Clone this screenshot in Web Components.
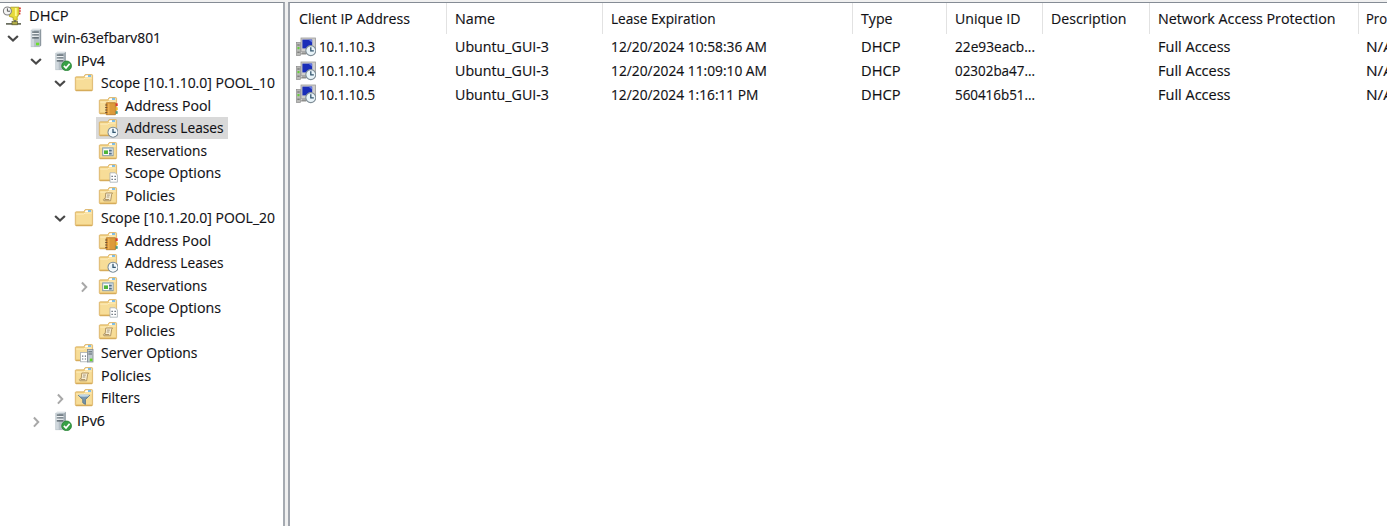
<!DOCTYPE html>
<html lang="en">
<head>
<meta charset="utf-8">
<title>DHCP</title>
<style>
html,body{margin:0;height:100%;overflow:hidden;background:#f0f0f0}
body{font-family:"Open Sans","Noto Sans",sans-serif;font-size:14.4px;color:#101014;-webkit-text-stroke:.15px #101014}
</style>
</head>
<body>
<dhcp-console></dhcp-console>
<script>
const folder = `<path d="M1.3 4.6Q1.3 3.8 2.2 3.8H9.6L11.2 1.5H17.6Q18.6 1.5 18.6 2.5V16.8Q18.6 17.8 17.6 17.8H2.3Q1.3 17.8 1.3 16.8Z" fill="#f0cd7c" stroke="#d9b164" stroke-width=".8"/><path d="M11.8 2.3H17.4V4H10.6Z" fill="#fff"/><path d="M14 3H17" stroke="#3b9ce0" stroke-width="1.3"/><path d="M2.2 5.6H9.8L11 4.6H17.8V16.6H2.2Z" fill="#f7dd98"/><path d="M2.2 6H9.9L11.1 5H17.8" stroke="#fff0c2" fill="none"/><path d="M2 17.3H18" stroke="#d3a753"/>`;
const server = `<path d="M5 2.2L6.6 .6H15L13.7 2.2Z" fill="#e3e8eb"/><path d="M13.5 2.2L15.2 .8V17.4L13.5 19Z" fill="#8c979f"/><rect x="4.8" y="1.9" width="9" height="17.2" fill="#b5bfc6"/><rect x="5.1" y="2.3" width="3" height="16.3" fill="#d0d8dd"/><path d="M6.2 4.2H12.8M6.2 7H12.8M6.2 9.8H12.8" stroke="#4c5860" stroke-width="1.2"/><path d="M6.2 5.4H12.8M6.2 8.2H12.8" stroke="#f5f7f8" stroke-width="1"/>`;
const clock = `<circle cx="15" cy="14.2" r="5" fill="#e9f4f9" stroke="#7b8c98" stroke-width="1.1"/><circle cx="15" cy="14.2" r="3.8" fill="none" stroke="#fff"/><path d="M15 10.8V14.4H17.8" stroke="#34566f" fill="none" stroke-width="1.3"/>`;
const check = `<circle cx="14.6" cy="14.9" r="4.9" fill="#37a046" stroke="#1c7a29" stroke-width=".7"/><path d="M11.9 14.9L14 17L17.6 12.7" stroke="#fff" stroke-width="1.7" fill="none"/>`;
const icons = {
  dhcp: `<path d="M8.6 1.2H17V8L15.2 11.5V14.3H11.2V11.5L7.4 10.5V8Z" fill="#e6da3a" stroke="#a79b1c" stroke-width=".8"/><path d="M13.8 2V10" stroke="#fffa91" stroke-width="1.8"/><path d="M17.1 2.4H18.8M17.1 5H18.8M17 7.6H18.4" stroke="#d8382f" stroke-width="1.7"/><path d="M13 14V18M4 17.8H19" stroke="#6b6f60" stroke-width="1.8"/><rect x="10" y="15.6" width="5.6" height="3.2" fill="#b0ac48" stroke="#5d5b34" stroke-width=".7"/><circle cx="5.4" cy="5" r="4" fill="#f4f4f4" stroke="#808080" stroke-width="1.1"/><path d="M5.4 2.4V5.2H8" stroke="#555" fill="none"/>`,
  server: server + `<rect x="10" y="14.7" width="3.2" height="2.6" fill="#6be02d"/>`,
  checked: `<g transform="translate(-1.4 0)">${server}</g>` + check,
  folder,
  pool: folder + `<path d="M8.3 6.8H17.4V18.7H8.3Z" fill="#dc9a3a" stroke="#b87a2c" stroke-width=".9"/><path d="M10.8 7.4V18.3" stroke="#f0b65c" stroke-width="1.3"/><path d="M7.2 9H9.3M7.2 11.5H9.3M7.2 14H9.3M7.2 16.5H9.3" stroke="#715033"/><path d="M18.7 7.3V10" stroke="#e3342b" stroke-width="2"/><path d="M18.7 11.3V14" stroke="#f1bd28" stroke-width="2"/><path d="M18.7 15.2V17.8" stroke="#3f9a8a" stroke-width="2"/>`,
  leases: folder + clock,
  reserve: folder + `<rect x="4.7" y="6.9" width="10.4" height="7.8" fill="#fbfcfb" stroke="#859aa4" stroke-width="1"/><path d="M5 7.2H14.8" stroke="#a9c3d3"/><rect x="6" y="9.4" width="4" height="3.6" fill="#4fb53a"/><rect x="11" y="8.6" width="2.8" height="2" fill="#54718a"/><rect x="11" y="11.6" width="2.8" height="2" fill="#54718a"/>`,
  options: folder + `<path d="M12 9.8H17.2L19.4 12V19.2H12Z" fill="#fff" stroke="#a5adb4" stroke-width=".8"/><path d="M13.5 13.3H14.8M16.5 13.3H17.8M13.5 16.3H14.8M16.5 16.3H17.8" stroke="#56616c" stroke-width="1.3"/>`,
  policies: folder + `<path d="M7.8 7H14.6Q13.3 8 13.4 10L12.6 14.8H5.9Q4.8 13.4 6.1 12.7L7.2 12.5Z" fill="#f9eed2" stroke="#a98d5b" stroke-width=".9"/><path d="M9 9.1H11.8M8.7 11H11.3" stroke="#9d917a" stroke-width=".9"/><path d="M6.5 13.6H11.2" stroke="#a98d5b"/>`,
  srvoptions: folder + `<rect x="6.6" y="9.4" width="6.9" height="9.4" fill="#fff" stroke="#a5adb4" stroke-width=".8"/><path d="M8.1 13.2H9.3M10.8 13.2H12M8.1 16H9.3M10.8 16H12" stroke="#56616c" stroke-width="1.2"/><rect x="13.4" y="6.4" width="5.6" height="12.6" fill="#c0c9cf" stroke="#828d95" stroke-width=".8"/><path d="M14.4 8.8H18M14.4 11H18" stroke="#5c6870"/><rect x="15.8" y="15.6" width="2.6" height="2.6" fill="#5fd524"/>`,
  filters: folder + `<path d="M4.4 7.4H15.6L11.4 11.5V16.4L8.8 14.8V11.5Z" fill="#7896ad" stroke="#56748a" stroke-width=".9"/><ellipse cx="10" cy="7.5" rx="5" ry="1.2" fill="#c2d8e5"/>`,
  client: `<rect x=".6" y="5.6" width="3.8" height="12.8" fill="#b9bab7" stroke="#8a8a8a" stroke-width=".7"/><path d="M1.3 8H3.7M1.3 15.2H3.7" stroke="#666"/><rect x="1.5" y="10" width="2" height="2.2" fill="#65cf3a"/><rect x="5" y="1" width="14.4" height="13.4" fill="#cfcecb" stroke="#999" stroke-width=".8"/><rect x="6.4" y="2.6" width="9.8" height="8.8" fill="#1a2db8"/><path d="M12.4 2.8H16V5.6Z" fill="#6077e2"/><path d="M5.5 15.2H12L10 17.6H5Z" fill="#8e8e8c"/><circle cx="14.8" cy="13.6" r="5" fill="#e9f4f9" stroke="#7f8d96" stroke-width="1.1"/><path d="M14.8 10.2V13.9H17.8" stroke="#34566f" fill="none" stroke-width="1.3"/>`,
  open: `<path d="M3.9 7.4L10 13.2L16.1 7.4" fill="none" stroke="#484848" stroke-width="2.7"/>`,
  closed: `<path d="M7.4 5.6L12.8 11.3L7.4 17" fill="none" stroke="#a8a8a8" stroke-width="2.5"/>`
};

class UiIcon extends HTMLElement {
  connectedCallback(){
    this.attachShadow({mode:"open"}).innerHTML = `<style>:host{display:block;flex:none;width:20px;height:20px}svg{display:block;width:100%;height:100%}</style><svg viewBox="0 0 20 20">${icons[this.getAttribute("name")]||""}</svg>`;
  }
}
customElements.define("ui-icon", UiIcon);

/* A single-line label, horizontally condensed to the width it is given. */
class UiLabel extends HTMLElement {
  connectedCallback(){
    const w = +this.getAttribute("width");
    const root = this.attachShadow({mode:"open"});
    root.innerHTML = `<style>:host{display:block;flex:none;width:${w}px;white-space:nowrap;line-height:20px;padding-top:.3px}span{display:inline-block;transform-origin:0 50%}</style><span><slot></slot></span>`;
    const s = root.querySelector("span");
    s.style.transform = `scaleX(${w / s.getBoundingClientRect().width})`;
  }
}
customElements.define("ui-label", UiLabel);

class TreeItem extends HTMLElement {
  connectedCallback(){
    const a = n => this.getAttribute(n), lv = +a("level");
    const shift = a("icon") === "checked" ? 2 : 0;
    this.attachShadow({mode:"open"}).innerHTML = `<style>
      :host{display:flex;align-items:center;height:22.53px;padding-left:${lv ? 23.85*lv-19.3 : 0}px}
      .twisty{width:16px;height:16px;flex:none;margin-right:4px}
      .item{display:flex;align-items:center;gap:${7-shift}px;height:100%;padding:0 4.6px 0 ${1.9+shift}px}
      :host([selected]) .item{background:#d9d9d9}
      </style>${lv ? `<ui-icon class="twisty" name="${a("state")||""}"></ui-icon>` : ""}
      <div class="item"><ui-icon name="${a("icon")}"></ui-icon><ui-label width="${a("width")}"><slot></slot></ui-label></div>`;
  }
}
customElements.define("tree-item", TreeItem);

const tree = [
 [0,"dhcp","DHCP",39.5],[1,"server","win-63efbarv801",108,"open"],[2,"checked","IPv4",28,"open"],
 [3,"folder","Scope [10.1.10.0] POOL_10",174,"open"],
 [4,"pool","Address Pool",86],[4,"leases","Address Leases",98.5,"",1],[4,"reserve","Reservations",82],[4,"options","Scope Options",96],[4,"policies","Policies",50],
 [3,"folder","Scope [10.1.20.0] POOL_20",174,"open"],
 [4,"pool","Address Pool",86],[4,"leases","Address Leases",98.5],[4,"reserve","Reservations",82,"closed"],[4,"options","Scope Options",96],[4,"policies","Policies",50],
 [3,"srvoptions","Server Options",96.5],[3,"policies","Policies",50],[3,"filters","Filters",39,"closed"],[2,"checked","IPv6",28,"closed"]];

class ScopeTree extends HTMLElement {
  connectedCallback(){
    this.attachShadow({mode:"open"}).innerHTML = `<style>:host{display:block;box-sizing:border-box;padding-top:1.3px}</style>` +
      tree.map(([l,i,t,w,s,sel]) => `<tree-item level="${l}" icon="${i}" width="${w}" state="${s||""}" ${sel?"selected":""}>${t}</tree-item>`).join("");
  }
}
customElements.define("scope-tree", ScopeTree);

const heads = [["Client IP Address",111],["Name",40],["Lease Expiration",104.5],["Type",31.5],["Unique ID",65.5],["Description",75.5],["Network Access Protection",177.5],["Pro",21]];
const rows = [
 [["10.1.10.3",56],["Ubuntu_GUI-3",94],["12/20/2024 10:58:36 AM",156],["DHCP",39.5],["22e93eacb...",80],null,["Full Access",72.5],["N/A",27]],
 [["10.1.10.4",56],["Ubuntu_GUI-3",94],["12/20/2024 11:09:10 AM",156],["DHCP",39.5],["02302ba47...",80],null,["Full Access",72.5],["N/A",27]],
 [["10.1.10.5",56],["Ubuntu_GUI-3",94],["12/20/2024 1:16:11 PM",147.5],["DHCP",39.5],["560416b51...",80],null,["Full Access",72.5],["N/A",27]]];

class LeaseList extends HTMLElement {
  connectedCallback(){
    const label = c => c ? `<ui-label width="${c[1]}">${c[0]}</ui-label>` : "";
    this.attachShadow({mode:"open"}).innerHTML = `<style>
      :host{display:block;overflow:hidden}
      .row{display:grid;grid-template-columns:157px 156px 250px 94px 96px 107px 208.5px 100px;height:23.8px;align-items:center}
      .cell{display:flex;align-items:center;padding-left:7.8px;box-sizing:border-box}
      .row .cell:first-child{padding-left:6px;gap:3px}
      .head{height:31px;margin-bottom:.9px;align-items:stretch}
      .head .cell{border-right:1px solid #e2e2e2;padding-top:1px}
      .head .cell:first-child{padding-left:8.7px}
      </style><div class="row head">${heads.map(h=>`<div class="cell">${label(h)}</div>`).join("")}</div>` +
      rows.map(r=>`<div class="row">${r.map((c,i)=>`<div class="cell">${i?"":'<ui-icon name="client"></ui-icon>'}${label(c)}</div>`).join("")}</div>`).join("");
  }
}
customElements.define("lease-list", LeaseList);

class DhcpConsole extends HTMLElement {
  connectedCallback(){
    this.attachShadow({mode:"open"}).innerHTML = `<style>
      :host{display:grid;grid-template-columns:285px 1fr;column-gap:3px;box-sizing:border-box;height:100vh;padding-top:2px;overflow:hidden}
      scope-tree,lease-list{background:#fff;border-top:1px solid #858c95;min-width:0}
      scope-tree{border-right:2px solid #a5aab1}
      lease-list{border-left:2px solid #a0a5ad}
      </style><scope-tree></scope-tree><lease-list></lease-list>`;
  }
}
customElements.define("dhcp-console", DhcpConsole);
</script>
</body>
</html>
